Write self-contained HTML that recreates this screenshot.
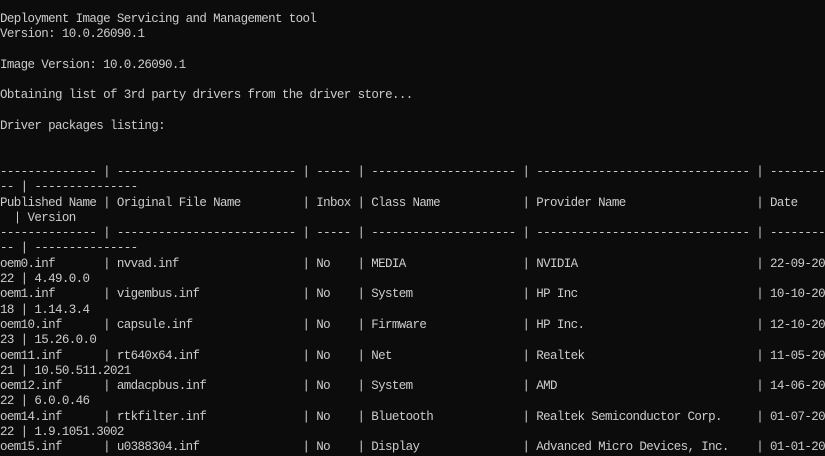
<!DOCTYPE html>
<html><head><meta charset="utf-8"><style>
html,body{margin:0;padding:0;background:#0c0c0c;width:825px;height:444px;overflow:hidden}
#t{position:absolute;left:0;top:12px;font-family:"Liberation Mono",monospace;font-size:12.5px;letter-spacing:-0.625px;line-height:15.3px;color:#cccccc;white-space:normal}
#t div{height:15.3px;white-space:pre}
#t span{display:inline-block;white-space:pre;overflow:visible;vertical-align:top}
.a{width:103.125px}.b{width:199.375px}.c{width:55px}.d{width:165px}.e{width:233.75px}
</style></head><body><div id="t"><div>Deployment Image Servicing and Management tool</div><div>Version: 10.0.26090.1</div><div> </div><div>Image Version: 10.0.26090.1</div><div> </div><div>Obtaining list of 3rd party drivers from the driver store...</div><div> </div><div>Driver packages listing:</div><div> </div><div> </div><div><span class="a">-------------- </span><span class="b">| -------------------------- </span><span class="c">| ----- </span><span class="d">| --------------------- </span><span class="e">| ------------------------------- </span>| --------</div><div>-- | ---------------</div><div><span class="a">Published Name </span><span class="b">| Original File Name</span><span class="c">| Inbox</span><span class="d">| Class Name</span><span class="e">| Provider Name</span>| Date</div><div>  | Version</div><div><span class="a">-------------- </span><span class="b">| -------------------------- </span><span class="c">| ----- </span><span class="d">| --------------------- </span><span class="e">| ------------------------------- </span>| --------</div><div>-- | ---------------</div><div><span class="a">oem0.inf</span><span class="b">| nvvad.inf</span><span class="c">| No</span><span class="d">| MEDIA</span><span class="e">| NVIDIA</span>| 22-09-20</div><div>22 | 4.49.0.0</div><div><span class="a">oem1.inf</span><span class="b">| vigembus.inf</span><span class="c">| No</span><span class="d">| System</span><span class="e">| HP Inc</span>| 10-10-20</div><div>18 | 1.14.3.4</div><div><span class="a">oem10.inf</span><span class="b">| capsule.inf</span><span class="c">| No</span><span class="d">| Firmware</span><span class="e">| HP Inc.</span>| 12-10-20</div><div>23 | 15.26.0.0</div><div><span class="a">oem11.inf</span><span class="b">| rt640x64.inf</span><span class="c">| No</span><span class="d">| Net</span><span class="e">| Realtek</span>| 11-05-20</div><div>21 | 10.50.511.2021</div><div><span class="a">oem12.inf</span><span class="b">| amdacpbus.inf</span><span class="c">| No</span><span class="d">| System</span><span class="e">| AMD</span>| 14-06-20</div><div>22 | 6.0.0.46</div><div><span class="a">oem14.inf</span><span class="b">| rtkfilter.inf</span><span class="c">| No</span><span class="d">| Bluetooth</span><span class="e">| Realtek Semiconductor Corp.</span>| 01-07-20</div><div>22 | 1.9.1051.3002</div><div><span class="a">oem15.inf</span><span class="b">| u0388304.inf</span><span class="c">| No</span><span class="d">| Display</span><span class="e">| Advanced Micro Devices, Inc.</span>| 01-01-20</div></div></body></html>
